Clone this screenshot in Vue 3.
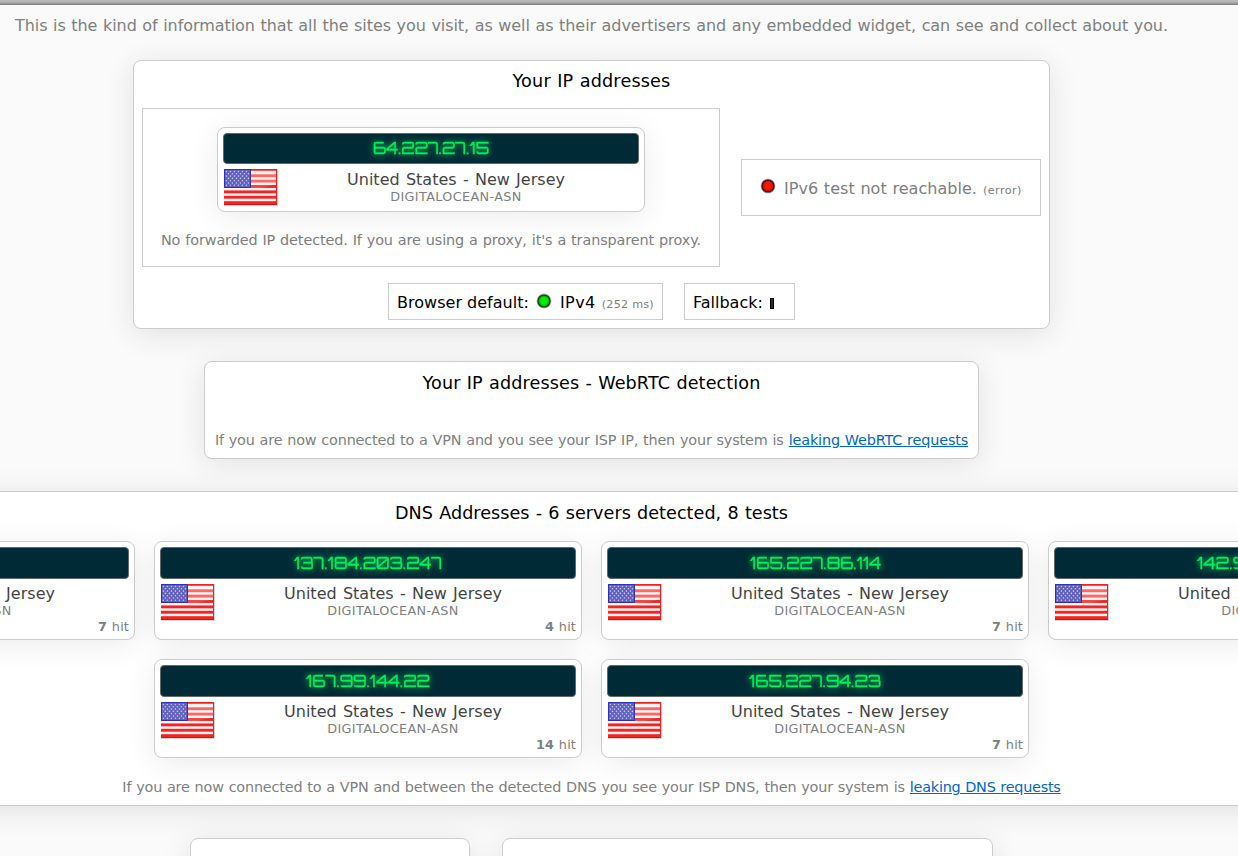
<script setup>
import { h } from 'vue'

const dnsRows = [
  [
    { ip: '142.93.65.180', width: 130, hits: 7 },
    { ip: '137.184.203.247', width: 148, hits: 4 },
    { ip: '165.227.86.114', width: 131, hits: 7 },
    { ip: '142.93.65.184', width: 130, hits: 7 },
  ],
  [
    { ip: '167.99.144.22', width: 124, hits: 14 },
    { ip: '165.227.94.23', width: 132, hits: 7 },
  ],
]

const stars = []
for (let r = 0; r < 7; r++) {
  for (let c = 0; c < 6; c++) stars.push([2.4 + c * 4 + (r % 2) * 2, 2.5 + r * 2.3])
}

const Flag = () =>
  h('svg', { width: 54, height: 37, viewBox: '0 0 54 37', style: { display: 'block' } }, [
    h('rect', { width: 54, height: 37, fill: '#e0d2d2' }),
    h('rect', { width: 53, height: 36, fill: '#fdf1f1' }),
    ...[0, 1, 2, 3, 4, 5, 6].map((i) =>
      h('rect', { y: i === 0 ? 0 : i * 5.38 - 0.1, width: 53, height: i === 0 ? 2 : 2.9, fill: i < 3 ? '#fb5050' : '#f32424' }),
    ),
    h('path', { d: 'M0 .5H53M52.5 0V36', stroke: '#f02020', fill: 'none' }),
    h('path', { d: 'M0 35.5H53', stroke: '#c91a1a' }),
    h('path', { d: 'M1 3H52V15Q26 24 1 18Z', fill: '#fff', opacity: 0.14 }),
    h('rect', { x: 0.5, y: 0.5, width: 26, height: 18, fill: '#6060be', stroke: '#3030b8' }),
    ...stars.map(([x, y]) => h('circle', { cx: x, cy: y, r: 0.8, fill: '#c8c8ee' })),
  ])

const IpText = (props) =>
  h('svg', { width: props.w, height: 29, viewBox: `0 0 ${props.w} 29`, style: { display: 'block', margin: '0 auto', overflow: 'visible' } }, [
    h('text', { x: 0, y: 20, textLength: props.w, lengthAdjust: 'spacingAndGlyphs' }, props.ip),
  ])
IpText.props = ['ip', 'w']

const Led = (props) =>
  h('svg', { class: 'led', width: 16, height: 16, viewBox: '0 0 16 16', style: { display: 'block' } }, [
    h('circle', { cx: 8, cy: 8, r: 7.4, fill: '#000', opacity: 0.35 }),
    h('circle', { cx: 8, cy: 8, r: 6.6, fill: props.dark }),
    h('circle', { cx: 8, cy: 8, r: 5.3, fill: props.mid }),
    h('circle', { cx: 8, cy: 8, r: 4, fill: props.color }),
  ])
Led.props = ['color', 'mid', 'dark']
</script>

<template>
  <div class="page">
    <div class="topbar"></div>
    <div class="content">
      <p class="intro">This is the kind of information that all the sites you visit, as well as their advertisers and any embedded widget, can see and collect about you.</p>

      <section class="panel addresses">
        <h4 class="t1">Your IP addresses</h4>
        <div class="columns">
          <div class="v4">
            <div class="card">
              <div class="bar"><IpText ip="64.227.27.15" :w="116" /></div>
              <div class="info">
                <div class="flag"><Flag /></div>
                <div class="place">United States - New Jersey</div>
                <div class="asn">DIGITALOCEAN-ASN</div>
              </div>
            </div>
            <p class="forward">No forwarded IP detected. If you are using a proxy, it's a transparent proxy.</p>
          </div>
          <div class="v6">
            <Led color="#ff1400" mid="#d30c00" dark="#4c1210" />
            <span class="v6text">IPv6 test not reachable.</span>
            <span class="error">(error)</span>
          </div>
        </div>
        <div class="chips">
          <div class="chip default">
            <span class="label">Browser default:</span>
            <Led color="#00ee00" mid="#08b808" dark="#164416" />
            <span class="proto">IPv4</span>
            <span class="ms">(252 ms)</span>
          </div>
          <div class="chip fallback">Fallback: <i class="wait"></i></div>
        </div>
      </section>

      <section class="panel webrtc">
        <h4 class="t2">Your IP addresses - WebRTC detection</h4>
        <p class="note n1"><span>If you are now connected to a VPN and you see your ISP IP, then your system is</span> <a>leaking WebRTC requests</a></p>
      </section>

      <section class="panel dns">
        <h4 class="t3">DNS Addresses - 6 servers detected, 8 tests</h4>
        <div v-for="(row, i) in dnsRows" :key="i" class="row">
          <div v-for="s in row" :key="s.ip" class="card tall">
            <div class="bar"><IpText :ip="s.ip" :w="s.width" /></div>
            <div class="info">
              <div class="flag"><Flag /></div>
              <div class="place">United States - New Jersey</div>
              <div class="asn">DIGITALOCEAN-ASN</div>
            </div>
            <div class="hits"><b>{{ s.hits }}</b> hit</div>
          </div>
        </div>
        <p class="note n2"><span>If you are now connected to a VPN and between the detected DNS you see your ISP DNS, then your system is</span> <a>leaking DNS requests</a></p>
      </section>

      <div class="bottom">
        <section class="panel b1"></section>
        <section class="panel b2"></section>
      </div>
    </div>
  </div>
</template>

<style>
html, body { overflow: hidden; background: #fafafa; }
</style>

<style scoped>
.page { width: 1238px; height: 856px; overflow: hidden; background: #fafafa; color: #000; font: 16px/20px Verdana, "DejaVu Sans", sans-serif; }
.page * { box-sizing: border-box; }
.topbar { height: 5px; background: linear-gradient(#bababa 0, #b4b4b4 40%, #7b7b7b 100%); }
.content { width: 1183px; display: flex; flex-direction: column; align-items: center; }
p, h4 { margin: 0; white-space: nowrap; word-spacing: .034em; }
h4 { font-size: 17.6px; line-height: 20px; font-weight: 400; text-align: center; }
.t1 { letter-spacing: .18px; }
.t2 { letter-spacing: .105px; }
.t3 { letter-spacing: .03px; }
.intro { margin-top: 11px; height: 44px; color: #808080; letter-spacing: -.057px; }
.panel { flex: none; background: #fff; border: 1px solid #ccc; border-radius: 8px; box-shadow: 0 5px 30px rgba(0, 0, 0, .1); }
.addresses { width: 917px; height: 269px; padding: 10px 8px 8px; }
.columns { display: flex; align-items: center; gap: 21px; margin-top: 17px; }
.v4 { width: 578px; height: 159px; border: 1px solid #ccc; padding-top: 18px; }
.v4 .card { margin: 0 auto; position: relative; }
.forward { margin-top: 18px; color: #808080; font-size: 14.4px; letter-spacing: -.105px; text-align: center; }
.v6 { width: 300px; height: 57px; border: 1px solid #ccc; display: flex; align-items: center; padding: 2px 0 0 18px; color: #808080; white-space: nowrap; }
.v6 svg { margin-top: -5px; }
.v6text { margin-left: 8px; word-spacing: .54px; letter-spacing: .04px; }
.error { font-size: 11.2px; letter-spacing: .455px; margin: 4px 0 0 6px; }
.chips { display: flex; justify-content: center; gap: 21px; margin-top: 16px; }
.chip { height: 37px; border: 1px solid #ccc; display: flex; align-items: center; padding: 2px 0 0 8px; white-space: nowrap; }
.default { width: 275px; }
.default svg { margin: -4px 0 0 7px; }
.label { letter-spacing: .02px; }
.proto { margin-left: 8px; letter-spacing: .45px; }
.ms { margin: 4px 0 0 6px; color: #808080; font-size: 11.2px; letter-spacing: .22px; }
.led { filter: blur(.4px); }
.fallback { width: 111px; }
.wait { width: 4px; height: 11px; margin: 1px 0 0 7px; background: #2a2a2a; border: 1px solid #000; }
.webrtc { width: 775px; height: 98px; margin-top: 32px; padding-top: 11px; }
.note { color: #808080; font-size: 14.4px; text-align: center; }
.note a { color: #0066cc; text-decoration: underline; }
.n1 { margin-top: 37px; }
.n1 span { letter-spacing: -.17px; }
.n1 a { letter-spacing: -.15px; }
.n2 { margin-top: 19px; }
.n2 span { letter-spacing: -.18px; }
.n2 a { letter-spacing: -.24px; }
.dns { width: 1789px; height: 315px; margin: 32px -303px 0; padding-top: 11px; }
.row { display: flex; justify-content: center; gap: 19px; margin-top: 19px; }
h4 + .row { margin-top: 18px; }
.card { width: 428px; height: 85px; background: #fff; border: 1px solid #ccc; border-radius: 8px; padding: 5px; box-shadow: 0 5px 30px rgba(0, 0, 0, .08); }
.tall { height: 99px; }
.bar { height: 31px; background: #002b36; border: 1px solid #606a6d; border-radius: 4px; }
.tall .bar { height: 31.5px; padding-top: 1px; }
.bar :deep(text) { font-family: Orbitron, "DejaVu Sans", sans-serif; font-size: 16.5px; font-weight: 400; fill: #00f05c; stroke: #00f05c; stroke-width: .35px; filter: drop-shadow(0 0 3px #00d050); }
.info { position: relative; text-align: center; padding: 6px 0 0 50px; height: 42px; }
.tall .info { padding-top: 5.5px; }
.flag { position: absolute; left: 1px; top: 5.4px; }
.place { color: #444; line-height: 20px; letter-spacing: .02px; word-spacing: 1.1px; white-space: nowrap; }
.asn { color: #808080; font-size: 12.8px; line-height: 13px; letter-spacing: .358px; }
.hits { color: #808080; font-size: 12.8px; line-height: 18px; text-align: right; word-spacing: .6px; letter-spacing: .15px; margin-top: -2.5px; }
.bottom { width: 100%; display: flex; justify-content: center; gap: 32px; margin-top: 32px; }
.b1 { width: 280px; height: 200px; }
.b2 { width: 491px; height: 200px; }
</style>
